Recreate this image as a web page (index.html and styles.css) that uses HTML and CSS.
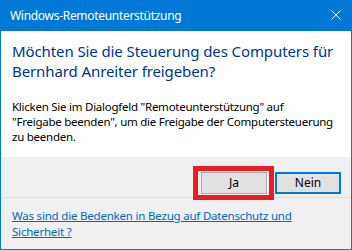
FILE: index.html
```html
<!DOCTYPE html>
<html lang="de">
<head>
  <meta charset="UTF-8" />
  <title>Windows-Remoteunterstützung</title>
  <link rel="stylesheet" href="styles.css">
</head>
<body>

  <div class="window">
    <div class="titlebar">
      <span class="title">Windows-Remoteunterstützung</span>
      <svg class="close" width="10" height="10" viewBox="0 0 10 10">
        <path d="M0.5 0.5 L9.5 9.5 M9.5 0.5 L0.5 9.5" stroke="#fff" stroke-width="1" fill="none"/>
      </svg>
    </div>

    <div class="content">
      <h1>Möchten Sie die Steuerung des Computers für Bernhard Anreiter freigeben?</h1>
      <p>Klicken Sie im Dialogfeld "Remoteunterstützung" auf<br>"Freigabe beenden", um die Freigabe der Computersteuerung zu beenden.</p>
    </div>

    <div class="footer">
      <div class="buttons">
        <div class="mark">
          <button class="btn">Ja</button>
        </div>
        <button class="btn default">Nein</button>
      </div>
      <div class="links">
        <a href="#">Was sind die Bedenken in Bezug auf Datenschutz und Sicherheit ?</a>
      </div>
    </div>
  </div>

</body>
</html>
```

FILE: styles.css
```css
body {
  margin: 0;
  font-family: "Noto Sans", sans-serif;
}

.window {
  width: 352px;
  height: 250px;
  box-sizing: border-box;
  border: 1px solid #0078d7;
  border-top: none;
  display: flex;
  flex-direction: column;
  background: #f0f0f0;
}

.titlebar {
  height: 31px;
  margin: 0 -1px;
  background: #0078d7;
  color: #fff;
  display: flex;
  align-items: center;
  padding: 0 11px 0 10px;
  font-size: 12px;
  letter-spacing: -0.3px;
}

.title {
  flex: 1;
}

.close {
  margin-top: -1px;
}

.content {
  background: #fff;
  height: 126px;
  box-sizing: border-box;
  padding: 10px 11px 0 11px;
}

h1 {
  margin: 0;
  font-size: 15px;
  letter-spacing: -0.1px;
  font-weight: normal;
  line-height: 20px;
  color: #003399;
}

p {
  margin: 18px 0 0 0;
  font-size: 11.5px;
  letter-spacing: -0.25px;
  line-height: 15px;
  color: #000;
}

.footer {
  flex: 1;
}

.buttons {
  display: flex;
  justify-content: flex-end;
  align-items: center;
  gap: 8px;
  padding: 11px 10px 0 0;
  height: 41px;
  box-sizing: border-box;
  border-bottom: 1px solid #dfdfdf;
}

.mark {
  position: relative;
}

.mark::after {
  content: "";
  position: absolute;
  left: -8px;
  top: -6px;
  right: -7px;
  bottom: -6px;
  border: 5px solid #ed1c24;
}

.btn {
  width: 66px;
  height: 22px;
  padding: 0;
  font-family: "Noto Sans", sans-serif;
  font-size: 12px;
  color: #000;
  background: #e1e1e1;
  border: 1px solid #adadad;
  display: block;
}

.btn.default {
  border: 2px solid #0078d7;
}

.links {
  padding: 10px 11px 0 11px;
  font-size: 11.5px;
  letter-spacing: -0.2px;
  line-height: 16px;
}

.links a {
  color: #0066cc;
}
```
